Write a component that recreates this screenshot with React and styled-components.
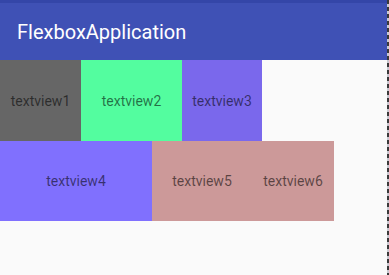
import React from "react";
import styled, { createGlobalStyle } from "styled-components";

const GlobalStyle = createGlobalStyle`
    html, body {
        margin: 0;
        padding: 0;
        background: #fafafa;
        font-family: Roboto, "Noto Sans", sans-serif;
    }
`;

const Screen = styled.div`
    display: flex;
    width: 389px;
    height: 275px;
    overflow: hidden;
    background: #fafafa;
`;

const Main = styled.div`
    flex: 1;
    display: flex;
    flex-direction: column;
`;

const Edge = styled.div`
    width: 2px;
    background: repeating-linear-gradient(
        to bottom,
        #3a3a3a 0px,
        #3a3a3a 4px,
        #c8c8d0 4px,
        #c8c8d0 7px
    );
`;

const StatusBar = styled.div`
    height: 3px;
    background: #3446a8;
`;

const AppBar = styled.header`
    height: 57px;
    display: flex;
    align-items: center;
    padding-left: 17px;
    background: #3f51b5;
    color: #fff;
    font-size: 20px;
    font-weight: 400;
`;

const Row = styled.div`
    display: flex;
    height: 81px;
    & + & {
        height: 80px;
    }
`;

const Cell = styled.div`
    width: ${(props) => props.width}px;
    display: flex;
    align-items: center;
    justify-content: center;
    background: ${(props) => props.color};
    color: rgba(0, 0, 0, 0.56);
    font-size: 14px;
`;

const rows = [
    [
        { text: "textview1", width: 81, color: "#666666" },
        { text: "textview2", width: 101, color: "#53fd9f" },
        { text: "textview3", width: 80, color: "#7a68ec" },
    ],
    [
        { text: "textview4", width: 152, color: "#8070fe" },
        { text: "textview5", width: 100, color: "#cc9999" },
        { text: "textview6", width: 82, color: "#cc9999" },
    ],
];

export default function App() {
    return (
        <>
            <GlobalStyle />
            <Screen>
                <Main>
                    <StatusBar />
                    <AppBar>FlexboxApplication</AppBar>
                    {rows.map((row, i) => (
                        <Row key={i}>
                            {row.map((cell) => (
                                <Cell key={cell.text} width={cell.width} color={cell.color}>
                                    {cell.text}
                                </Cell>
                            ))}
                        </Row>
                    ))}
                </Main>
                <Edge />
            </Screen>
        </>
    );
}
